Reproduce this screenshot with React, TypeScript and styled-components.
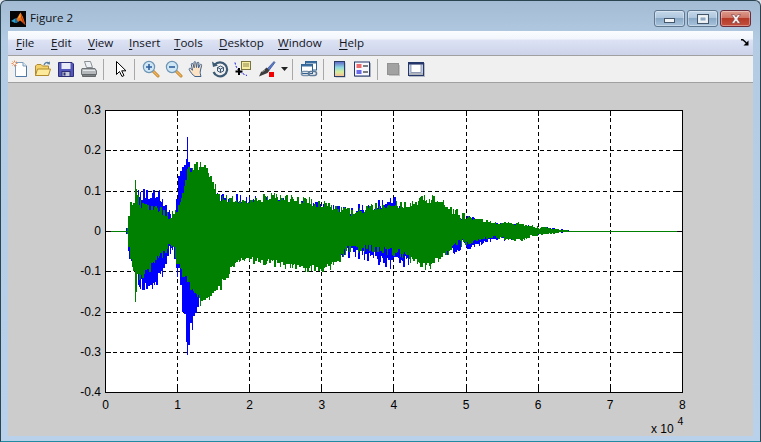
import React, { useMemo } from "react";
import styled, { createGlobalStyle } from "styled-components";

const Global = createGlobalStyle`
  html, body { margin: 0; padding: 0; background: #dfe6ee; }
  #root { width: 761px; height: 442px; overflow: hidden; }
`;

const Window = styled.div`
  box-sizing: border-box;
  width: 761px;
  height: 442px;
  display: flex;
  flex-direction: column;
  border: 1px solid #2c4450;
  border-bottom-color: #1f8aa0;
  border-radius: 6px 6px 0 0;
  background: linear-gradient(180deg, #a3bcd3 0, #b3cbe3 40px, #b9d1ea 100%);
  padding: 0 7px 5px 7px;
`;

const TitleBar = styled.div`
  height: 30px;
  flex: none;
  display: flex;
  align-items: flex-start;
  margin-right: 2px;
`;

const AppIcon = styled.svg`
  width: 16px;
  height: 16px;
  margin: 10px 0 0 2px;
  flex: none;
`;

const Title = styled.span`
  margin: 9px 0 0 4px;
  font: 11.6px/16px "Open Sans", "Noto Sans", sans-serif;
  color: #101418;
`;

const Controls = styled.div`
  margin: 9px 0 0 auto;
  display: flex;
  gap: 2px;
`;

const Control = styled.div<{ $close?: boolean }>`
  box-sizing: border-box;
  width: 31px;
  height: 17px;
  display: flex;
  align-items: center;
  justify-content: center;
  border: 1px solid ${(p) => (p.$close ? "#6b2d3c" : "#5f7890")};
  border-radius: 3px;
  box-shadow: inset 0 0 0 1px rgba(255, 255, 255, 0.35);
  background: ${(p) =>
    p.$close
      ? "linear-gradient(180deg, #dd9c8e 0, #cf7565 45%, #b53a28 50%, #c4503e 100%)"
      : "linear-gradient(180deg, #c5d8ea 0, #aec6dd 45%, #8aa9c6 50%, #a9c3dc 100%)"};
`;

const ControlGlyph = styled.svg`
  width: 16px;
  height: 12px;
  display: block;
`;

const Client = styled.div`
  flex: 1;
  display: flex;
  flex-direction: column;
  min-height: 0;
`;

const MenuBar = styled.div`
  height: 24px;
  flex: none;
  display: flex;
  align-items: center;
  padding-left: 8px;
  position: relative;
  border-bottom: 1px solid #a0a0a0;
  background: linear-gradient(180deg, #fafcfe 0, #f2f6fc 8px, #dde3f4 9px, #ccd3ea 100%);
`;

const MenuItem = styled.span<{ $w: number }>`
  width: ${(p) => p.$w}px;
  flex: none;
  font: 11.6px/16px "Open Sans", "Noto Sans", sans-serif;
  color: #12141c;
  white-space: nowrap;
  u { text-underline-offset: 2px; }
`;

const DockIcon = styled.svg`
  position: absolute;
  right: 4px;
  top: 8px;
  width: 8px;
  height: 7px;
`;

const ToolBar = styled.div`
  height: 26px;
  flex: none;
  display: flex;
  align-items: center;
  border-bottom: 1px solid #a0a0a0;
  background: #f0f0f0;
`;

const ToolButton = styled.div<{ $w?: number }>`
  width: ${(p) => p.$w ?? 23}px;
  height: 22px;
  flex: none;
  display: flex;
  align-items: center;
  justify-content: center;
`;

const ToolIcon = styled.svg`
  width: 18px;
  height: 18px;
  display: block;
`;

const Separator = styled.div<{ $l: number; $r: number }>`
  width: 1px;
  height: 21px;
  flex: none;
  margin: 0 ${(p) => p.$r}px 0 ${(p) => p.$l}px;
  background: #a8a8a8;
`;

const FigureArea = styled.div`
  flex: 1;
  min-height: 0;
  background: #cccccc;
`;

const Plot = styled.svg`
  display: block;
  width: 745px;
  height: 354px;
`;

const TickText = styled.text<{ $size?: number }>`
  font: ${(p) => p.$size ?? 12}px "Liberation Sans", Arial, sans-serif;
  fill: #000;
`;

type Pt = [number, number];

const interp = (pts: Pt[], x: number): number => {
  if (x <= pts[0][0]) return pts[0][1];
  for (let i = 1; i < pts.length; i++) {
    if (x <= pts[i][0]) {
      const [x0, y0] = pts[i - 1];
      const [x1, y1] = pts[i];
      return y0 + ((y1 - y0) * (x - x0)) / (x1 - x0);
    }
  }
  return pts[pts.length - 1][1];
};

const greenTop: Pt[] = [[127, 228], [129, 204], [133, 196], [135, 180], [137, 194], [142, 203], [160, 207], [170, 213], [175, 208], [180, 196], [187, 168], [196, 161], [204, 163], [210, 172], [215, 184], [220, 193], [228, 196], [250, 195], [275, 193], [310, 197], [330, 203], [350, 208], [370, 204], [390, 200], [403, 202], [423, 195], [437, 195], [450, 205], [470, 217], [497, 222], [520, 222], [537, 226], [550, 228], [565, 230], [576, 231]];
const greenBot: Pt[] = [[127, 234], [129, 260], [133, 278], [135, 302], [137, 282], [142, 280], [155, 266], [165, 254], [170, 246], [173, 252], [176, 265], [180, 274], [190, 292], [200, 306], [210, 300], [220, 290], [230, 274], [240, 266], [250, 264], [275, 268], [310, 273], [330, 272], [347, 254], [377, 252], [400, 258], [417, 268], [427, 271], [443, 261], [457, 248], [490, 238], [517, 242], [530, 238], [543, 235], [565, 232], [576, 231]];
const blueTop: Pt[] = [[126, 228], [128, 220], [133, 205], [137, 190], [150, 186], [160, 190], [166, 197], [172, 211], [175, 206], [178, 176], [183, 150], [187, 137], [190, 156], [195, 170], [200, 188], [250, 196], [300, 198], [340, 206], [370, 202], [383, 196], [395, 196], [405, 204], [440, 206], [460, 213], [477, 217], [490, 222], [520, 224], [560, 229], [578, 231]];
const blueBot: Pt[] = [[126, 234], [130, 268], [140, 290], [150, 292], [158, 286], [165, 270], [172, 250], [176, 272], [180, 302], [183, 325], [187, 355], [190, 335], [195, 332], [198, 295], [205, 285], [250, 255], [300, 262], [340, 258], [370, 262], [383, 270], [400, 270], [412, 266], [440, 258], [460, 253], [470, 250], [485, 243], [510, 240], [540, 235], [578, 231]];

const buildPath = (top: Pt[], bot: Pt[], x0: number, x1: number, seed: number, amp: (x: number) => number, peaks: number[]) => {
  let s = seed;
  const rnd = () => {
    s = (s * 1664525 + 1013904223) >>> 0;
    return s / 4294967296;
  };
  const inset = (a: number) => (rnd() < 0.32 ? rnd() * a * 0.25 : a * (0.4 + rnd() * 0.5));
  let out = "";
  let t = 231;
  let b = 232;
  let hold = 0;
  for (let x = x0; x <= x1; x++) {
    const peak = peaks.includes(x);
    if (hold <= 0 || peak) {
      const a = peak ? 0 : amp(x);
      t = Math.round(interp(top, x) + inset(a));
      b = Math.round(interp(bot, x) - inset(a));
      hold = peak ? 1 : rnd() < 0.6 ? 1 : 2;
    }
    hold--;
    out += `M${x + 0.5} ${Math.min(t, 231)}V${Math.max(b, 232)}`;
  }
  return out;
};

const ampOf = (x: number) => (x < 129 ? 0 : x > 540 ? 1 : x > 465 ? 3 : 9);

const Wave: React.FC = () => {
  const blue = useMemo(() => buildPath(blueTop, blueBot, 126, 578, 17, (x) => (x > 170 && x < 200 ? 22 : ampOf(x) * 1.6), [187]), []);
  const green = useMemo(() => buildPath(greenTop, greenBot, 127, 576, 91, ampOf, [135, 200]), []);
  return (
    <g shapeRendering="crispEdges" fill="none">
      <path d={blue} stroke="#0000ff" />
      <path d="M106 231.5H682" stroke="#008000" />
      <path d={green} stroke="#008000" />
    </g>
  );
};

const xTicks = [0, 1, 2, 3, 4, 5, 6, 7, 8];
const yTicks: [string, number][] = [["0.3", 110], ["0.2", 150], ["0.1", 191], ["0", 231], ["-0.1", 271], ["-0.2", 312], ["-0.3", 352], ["-0.4", 392]];
const xAt = (t: number) => 105 + t * 72.1;

const Chart: React.FC = () => (
  <Plot viewBox="8 83 745 354">
    <rect x={105.5} y={110.5} width={576.5} height={282} fill="#fff" />
    <g stroke="#000" strokeDasharray="4 3" shapeRendering="crispEdges" fill="none">
      {xTicks.slice(1, -1).map((t) => (
        <path key={t} d={`M${Math.round(xAt(t)) + 0.5} 111V392`} />
      ))}
      {yTicks.slice(1, -1).map(([l, y]) => (
        <path key={l} d={`M106 ${y + 0.5}H682`} />
      ))}
    </g>
    <Wave />
    <rect x={105.5} y={110.5} width={576.5} height={282} fill="none" stroke="#000" shapeRendering="crispEdges" />
    <g stroke="#000" shapeRendering="crispEdges" fill="none">
      {xTicks.slice(1, -1).map((t) => (
        <path key={t} d={`M${Math.round(xAt(t)) + 0.5} 111v5M${Math.round(xAt(t)) + 0.5} 392v-5`} />
      ))}
      {yTicks.slice(1, -1).map(([l, y]) => (
        <path key={l} d={`M106 ${y + 0.5}h5M682 ${y + 0.5}h-5`} />
      ))}
    </g>
    {xTicks.map((t) => (
      <TickText key={t} x={xAt(t) + 0.5} y={409} textAnchor="middle">{t}</TickText>
    ))}
    {yTicks.map(([l, y]) => (
      <TickText key={l} x={101} y={y + 4} textAnchor="end">{l}</TickText>
    ))}
    <TickText x={651} y={433}>x 10</TickText>
    <TickText x={677.5} y={425} $size={10.5}>4</TickText>
  </Plot>
);

const NewIcon = () => (
  <ToolIcon viewBox="0 0 18 18">
    <path d="M4.5 2.5H12L15.5 6V16.5H4.5Z" fill="#fff" stroke="#7f9db9" />
    <path d="M12 2.5V6H15.5" fill="#dce8f4" stroke="#7f9db9" />
    <path d="M15.5 6V16.5H5" fill="none" stroke="#4f7aa8" />
    <path d="M3.5 .5v6M.5 3.5h6M1.5 1.5l4 4M5.5 1.5l-4 4" stroke="#ee8a50" />
    <circle cx="3.5" cy="3.5" r="1.2" fill="#fff" />
  </ToolIcon>
);
const OpenIcon = () => (
  <ToolIcon viewBox="0 0 18 18">
    <path d="M10 5C11 2.5 13 2 15 3" fill="none" stroke="#5a7f9f" strokeWidth="1.3" />
    <path d="M15.8 1.2L16 4.6 12.8 4Z" fill="#5a7f9f" />
    <path d="M1.5 15.5V6L3 4.5H7L8.5 6H14.5V15.5Z" fill="#f4d26b" stroke="#b08a2c" />
    <path d="M1.5 15.5L3.5 9H16.5L14.5 15.5Z" fill="#fde99a" stroke="#b08a2c" />
  </ToolIcon>
);
const SaveIcon = () => (
  <ToolIcon viewBox="0 0 18 18">
    <path d="M1.5 2.5H15L16.5 4V16.5H1.5Z" fill="#5557b8" stroke="#2c2e78" />
    <rect x="4.5" y="3" width="9" height="6" fill="#e9ecf8" />
    <rect x="5" y="11.5" width="8" height="5" fill="#c8cbd8" stroke="#2c2e78" />
    <rect x="6.5" y="12.5" width="2" height="3" fill="#2c2e78" />
  </ToolIcon>
);
const PrintIcon = () => (
  <ToolIcon viewBox="0 0 18 18">
    <path d="M4.5 1.5H10.5L12.5 7.5H6.5Z" fill="#eef1f4" stroke="#8a9096" />
    <path d="M2 8.5H15L16.5 11V14.5H1.5V10Z" fill="#b4b8bb" stroke="#6f7478" />
    <path d="M2.5 14.5H15.5V16.5H2.5Z" fill="#7d8285" stroke="#63676a" />
    <path d="M3 10.5H15" stroke="#e4e6e8" />
  </ToolIcon>
);
const ArrowIcon = () => (
  <ToolIcon viewBox="0 0 18 18">
    <path d="M4.5 1.5V14.5L7.5 11.5L10 16.5L12 15.5L9.7 10.8H14Z" fill="#fff" stroke="#000" strokeLinejoin="miter" />
  </ToolIcon>
);
const ZoomIcon: React.FC<{ plus?: boolean }> = ({ plus }) => (
  <ToolIcon viewBox="0 0 18 18">
    <path d="M10.5 10.5L16 16" stroke="#b8802a" strokeWidth="3" strokeLinecap="round" />
    <path d="M10.5 10.5L16 16" stroke="#f3b45a" strokeWidth="1.4" strokeLinecap="round" />
    <circle cx="7" cy="7" r="5.6" fill="#cfe6f5" stroke="#6d95b4" strokeWidth="1.2" />
    <path d={plus ? "M4 7H10M7 4V10" : "M4 7H10"} stroke="#2f5f9c" strokeWidth="1.6" />
  </ToolIcon>
);
const HandIcon = () => (
  <ToolIcon viewBox="0 0 18 18">
    <path
      d="M7 16.5C5 15.5 2 11.5 1.2 9.5C.9 8.4 2 7.8 2.9 8.6L4.5 10.2L3.3 4.5C3.1 3.3 4.7 3 5 4.1L6.2 7.8L6 2.6C6 1.3 7.7 1.3 7.8 2.6L8.5 7.5L9.2 3C9.4 1.8 11 2 10.9 3.3L10.5 8L12 4.8C12.5 3.7 14 4.3 13.6 5.5L12.3 11C12 13 12.5 14.5 13 16.5Z"
      fill="#fbe3c4"
      stroke="#3f5f8a"
      strokeLinejoin="round"
    />
  </ToolIcon>
);
const RotateIcon = () => (
  <ToolIcon viewBox="0 0 18 18">
    <path d="M3.6 5A7 7 0 1 1 2.6 12" fill="none" stroke="#3d5a74" strokeWidth="2.2" />
    <path d="M1 1.5L2 7L7 5.5Z" fill="#3d5a74" />
    <path d="M6.5 7.5L9.5 6L12.5 7.5V11L9.5 12.5L6.5 11ZM6.5 7.5L9.5 9L12.5 7.5M9.5 9V12.5" fill="#dfe8f0" stroke="#2f4860" strokeWidth=".9" />
  </ToolIcon>
);
const CursorIcon = () => (
  <ToolIcon viewBox="0 0 18 18">
    <path d="M1 2.5C2 9 6 13 13 15.5" fill="none" stroke="#1414e0" strokeDasharray="2 1.5" />
    <rect x="7.5" y="1.5" width="9" height="8" fill="#f6eda0" stroke="#7a7440" />
    <path d="M9 4H15M9 6H15" stroke="#8d8750" />
    <path d="M5 8V15M1.5 11.5H8.5" stroke="#000" strokeWidth="2" />
  </ToolIcon>
);
const BrushIcon = () => (
  <ToolIcon viewBox="0 0 18 18">
    <path d="M9 9L16 1.5L17 2.5L11 10.5Z" fill="#5a78c8" stroke="#2f4a90" strokeWidth=".7" />
    <path d="M8.5 7.5L11.5 10.5L9.5 13L1 16.5L3 12L6 10Z" fill="#3c3c3c" />
    <path d="M4 12L7 10" stroke="#9a9a9a" />
    <rect x="11" y="12" width="5" height="5" fill="#f00000" />
  </ToolIcon>
);
const CaretIcon = () => (
  <svg width="7" height="4" viewBox="0 0 7 4">
    <path d="M0 0H7L3.5 4Z" fill="#222" />
  </svg>
);
const LinkIcon = () => (
  <ToolIcon viewBox="0 0 18 18">
    <rect x="5.5" y="1.5" width="11" height="8.5" fill="#fff" stroke="#2f5f8f" />
    <rect x="5.5" y="1.5" width="11" height="2" fill="#3b6ea0" />
    <rect x="1.5" y="4.5" width="11" height="9" fill="#fff" stroke="#2f5f8f" />
    <rect x="1.5" y="4.5" width="11" height="2" fill="#3b6ea0" />
    <rect x="1.5" y="11.5" width="8" height="4" rx="2" fill="none" stroke="#7a93ad" strokeWidth="1.6" />
    <rect x="8.5" y="11.5" width="8" height="4" rx="2" fill="none" stroke="#5f7a96" strokeWidth="1.6" />
  </ToolIcon>
);
const ColorbarIcon = () => (
  <ToolIcon viewBox="0 0 18 18">
    <defs>
      <linearGradient id="cb" x1="0" y1="0" x2="0" y2="1">
        <stop offset="0" stopColor="#5a62c8" />
        <stop offset=".4" stopColor="#8fd8e0" />
        <stop offset=".7" stopColor="#d8ee9a" />
        <stop offset="1" stopColor="#f8b89a" />
      </linearGradient>
    </defs>
    <rect x="4.5" y="2.5" width="10" height="15" fill="#a8b0bc" />
    <rect x="3.5" y="1.5" width="10" height="15" fill="url(#cb)" stroke="#2a3d66" />
  </ToolIcon>
);
const LegendIcon = () => (
  <ToolIcon viewBox="0 0 18 18">
    <rect x="2" y="3" width="16" height="14" fill="#a8b0bc" />
    <rect x="1.5" y="2" width="15" height="14" fill="#f6f8fc" stroke="#24366a" />
    <rect x="3.5" y="4" width="5" height="4" fill="#ee6a6a" />
    <rect x="3.5" y="10" width="5" height="4" fill="#6a6ae8" />
    <path d="M10 6H15M10 12H15" stroke="#000" />
  </ToolIcon>
);
const SquareIcon = () => (
  <ToolIcon viewBox="0 0 18 18">
    <rect x="5" y="5" width="11" height="11" fill="#c2c2c2" />
    <rect x="3.5" y="3.5" width="11" height="11" fill="#a2a2a2" stroke="#929292" />
  </ToolIcon>
);
const SubplotIcon = () => (
  <ToolIcon viewBox="0 0 18 18">
    <rect x="2" y="3" width="16" height="14" fill="#b4bac4" />
    <rect x="1.5" y="2.5" width="15" height="13" fill="#c4cee0" stroke="#24366a" />
    <rect x="1.5" y="2.5" width="15" height="2" fill="#24366a" />
    <rect x="4" y="4.5" width="10" height="8" fill="#fff" stroke="#5a6a8a" strokeWidth=".6" />
    <rect x="2" y="13" width="14" height="2" fill="#b0b4bc" />
  </ToolIcon>
);

const menus: [string, string, number][] = [
  ["F", "ile", 35],
  ["E", "dit", 37],
  ["V", "iew", 41],
  ["I", "nsert", 45],
  ["T", "ools", 45],
  ["D", "esktop", 59],
  ["W", "indow", 61],
  ["H", "elp", 40],
];

export default function App() {
  return (
    <>
      <Global />
      <Window>
        <TitleBar>
          <AppIcon viewBox="0 0 16 16">
            <rect width="16" height="16" fill="#050505" />
            <path d="M1 10L5 7.5L7.5 9L5 12Z" fill="#2f9fc8" />
            <path d="M5 7.5L7 7L9 9L7 12L5 12Z" fill="#1c6f9c" />
            <path d="M6.5 8L10.5 1.5L13 6L15.5 14L12 11L10 9.5L8 11Z" fill="#e8701c" />
            <path d="M10.5 1.5L12 6L15.5 14L13 12L11 6Z" fill="#c23a10" />
            <path d="M8 7.5L10.5 1.5L10.5 6Z" fill="#f6b030" />
          </AppIcon>
          <Title>Figure 2</Title>
          <Controls>
            <Control>
              <ControlGlyph viewBox="0 0 16 12">
                <rect x="2.5" y="5.5" width="10" height="4" fill="#f2f5f8" stroke="#44566a" />
              </ControlGlyph>
            </Control>
            <Control>
              <ControlGlyph viewBox="0 0 16 12">
                <rect x="2.5" y="1.5" width="11" height="9" fill="#e8edf2" stroke="#44566a" />
                <rect x="5" y="4" width="6" height="4" fill="#8fa9c2" stroke="#fff" strokeWidth=".8" />
              </ControlGlyph>
            </Control>
            <Control $close>
              <ControlGlyph viewBox="0 0 16 12">
                <path d="M3.5 1.5H6.3L8 4L9.7 1.5H12.5L9.6 6L12.5 10.5H9.7L8 8L6.3 10.5H3.5L6.4 6Z" fill="#eeeef0" stroke="#7a3a3a" strokeWidth=".6" />
              </ControlGlyph>
            </Control>
          </Controls>
        </TitleBar>
        <Client>
          <MenuBar>
            {menus.map(([u, rest, w]) => (
              <MenuItem key={u} $w={w}>
                <u>{u}</u>
                {rest}
              </MenuItem>
            ))}
            <DockIcon viewBox="0 0 8 7">
              <path d="M0 .8H1.8L5.5 4" stroke="#000" strokeWidth="1.5" fill="none" />
              <path d="M7.5 1.5V6.5H2.5Z" fill="#000" />
            </DockIcon>
          </MenuBar>
          <ToolBar>
            <ToolButton><NewIcon /></ToolButton>
            <ToolButton><OpenIcon /></ToolButton>
            <ToolButton><SaveIcon /></ToolButton>
            <ToolButton><PrintIcon /></ToolButton>
            <Separator $l={3} $r={5} />
            <ToolButton><ArrowIcon /></ToolButton>
            <Separator $l={2} $r={4} />
            <ToolButton><ZoomIcon plus /></ToolButton>
            <ToolButton><ZoomIcon /></ToolButton>
            <ToolButton><HandIcon /></ToolButton>
            <ToolButton><RotateIcon /></ToolButton>
            <ToolButton><CursorIcon /></ToolButton>
            <ToolButton $w={25}><BrushIcon /></ToolButton>
            <ToolButton $w={10}><CaretIcon /></ToolButton>
            <Separator $l={3} $r={4} />
            <ToolButton><LinkIcon /></ToolButton>
            <Separator $l={3} $r={5} />
            <ToolButton $w={21}><ColorbarIcon /></ToolButton>
            <ToolButton><LegendIcon /></ToolButton>
            <Separator $l={4} $r={4} />
            <ToolButton $w={22}><SquareIcon /></ToolButton>
            <ToolButton><SubplotIcon /></ToolButton>
          </ToolBar>
          <FigureArea>
            <Chart />
          </FigureArea>
        </Client>
      </Window>
    </>
  );
}
